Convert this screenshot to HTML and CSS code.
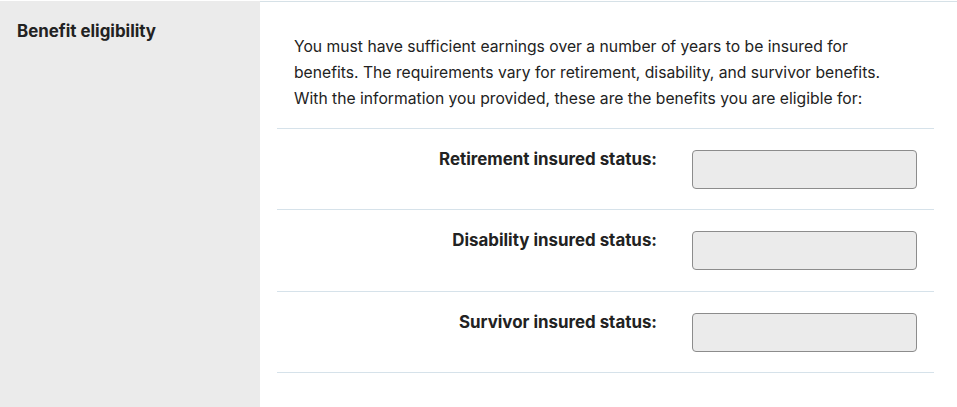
FILE: index.html
```html
<!DOCTYPE html>
<html lang="en">
<head>
<meta charset="utf-8">
<title>Benefit eligibility</title>
<link rel="stylesheet" href="styles.css">
</head>
<body>
<section class="panel">
  <aside class="side">
    <h2 class="side-title">Benefit eligibility</h2>
  </aside>
  <div class="main">
    <p class="intro">You must have sufficient earnings over a number of years to be insured for benefits. The requirements vary for retirement, disability, and survivor benefits. With the information you provided, these are the benefits you are eligible for:</p>
    <div class="rows">
      <div class="row">
        <label class="row-label" for="ret">Retirement insured status:</label>
        <input class="row-input" id="ret" type="text" disabled>
      </div>
      <div class="row row-mid">
        <label class="row-label" for="dis">Disability insured status:</label>
        <input class="row-input" id="dis" type="text" disabled>
      </div>
      <div class="row">
        <label class="row-label" for="sur">Survivor insured status:</label>
        <input class="row-input" id="sur" type="text" disabled>
      </div>
    </div>
  </div>
</section>
</body>
</html>
```
FILE: styles.css
```css
html, body {
  margin: 0;
  padding: 0;
  background: #ffffff;
}
body {
  font-family: Inter, "Liberation Sans", Arial, sans-serif;
  color: #222222;
  padding-top: 1px;
}
.panel {
  display: flex;
  min-height: 406px;
}
.side {
  width: 260px;
  flex: none;
  background: #ebebeb;
  box-sizing: border-box;
  padding: 20px 17px;
}
.side-title {
  margin: 0;
  font-size: 16.9px;
  line-height: 20px;
  font-weight: 700;
  color: #222222;
}
.main {
  flex: 1;
  border-top: 1px solid #d6e1e7;
  padding: 0 23px 0 17px;
}
.intro {
  margin: 0;
  padding: 32px 19px 16px 17px;
  font-size: 15.7px;
  line-height: 26px;
  color: #222222;
}
.rows {
  border-top: 1px solid #d6e2ea;
}
.row {
  display: flex;
  align-items: flex-start;
  padding: 21px 17px 20px 0;
  border-bottom: 1px solid #d6e2ea;
}
.row-mid {
  padding-bottom: 21px;
}
.row-label {
  width: 380px;
  flex: none;
  text-align: right;
  font-size: 16.9px;
  font-weight: 700;
  line-height: 18px;
  margin-right: 35px;
}
.row-input {
  flex: 1;
  height: 39px;
  box-sizing: border-box;
  margin: 0;
  border: 1px solid #8c8c8c;
  border-radius: 4px;
  background: #ebebeb;
}
```
